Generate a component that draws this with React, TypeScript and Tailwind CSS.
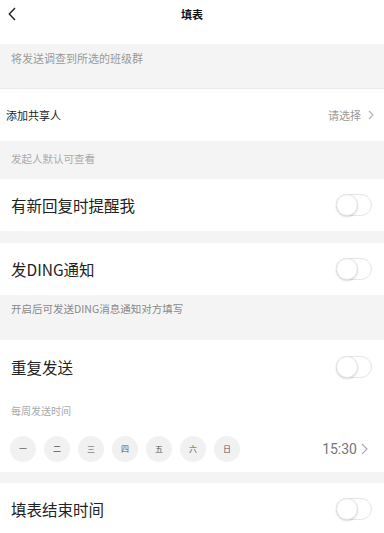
import React from "react";

const font = { fontFamily: '"Noto Sans CJK SC", "Noto Sans", sans-serif' };

function Toggle() {
  return (
    <div className="relative w-[36px] h-[22px] rounded-full border border-[#e6e6e6] bg-white">
      <div className="absolute left-[-1px] top-[-1px] w-[22px] h-[22px] rounded-full bg-white border border-[#e4e4e4] shadow-[0_1px_2px_rgba(0,0,0,0.15)]" />
    </div>
  );
}

function Chevron() {
  return (
    <svg width="6" height="10" viewBox="0 0 6 10" fill="none">
      <path d="M1 1l4 4-4 4" stroke="#b5b5b5" strokeWidth="1.1" />
    </svg>
  );
}

function ToggleRow({ label, h = "h-[52px]" }: { label: string; h?: string }) {
  return (
    <div className={`flex items-center justify-between bg-white pl-[11px] pr-[12px] ${h}`}>
      <div className="text-[15.5px] leading-[20px] text-[#222]">{label}</div>
      <Toggle />
    </div>
  );
}

export default function App() {
  const days = ["一", "二", "三", "四", "五", "六", "日"];
  return (
    <div className="w-[384px] h-[533px] overflow-hidden bg-[#f4f4f4]" style={font}>
      {/* header */}
      <div className="bg-white h-[44px]">
        <div className="relative flex items-center justify-center h-[28px]">
          <svg className="absolute left-[8px] top-[7px]" width="8" height="14" viewBox="0 0 8 14" fill="none">
            <path d="M7 1L1.3 7 7 13" stroke="#222" strokeWidth="1.4" />
          </svg>
          <div className="text-[11px] leading-[14px] font-bold text-[#111]">填表</div>
        </div>
      </div>
      {/* gray notice */}
      <div className="h-[45px] pt-[7px] pl-[11px] border-b border-[#ebebeb] text-[11px] leading-[14px] text-[#999]">
        将发送调查到所选的班级群
      </div>
      {/* share row */}
      <div className="flex items-center justify-between bg-white h-[52px] pl-[6px] pr-[10px]">
        <div className="text-[11px] leading-[14px] text-[#222]">添加共享人</div>
        <div className="flex items-center gap-[7px]">
          <div className="text-[11px] leading-[14px] text-[#999]">请选择</div>
          <Chevron />
        </div>
      </div>
      <div className="h-[38px] pt-[11px] pl-[11px] text-[10.5px] leading-[14px] text-[#aaa]">
        发起人默认可查看
      </div>
      <ToggleRow label="有新回复时提醒我" />
      <div className="h-[12px]" />
      <ToggleRow label="发DING通知" />
      <div className="h-[45px] pt-[7px] pl-[11px] text-[10.5px] leading-[14px] text-[#888]">
        开启后可发送DING消息通知对方填写
      </div>
      {/* repeat send */}
      <div className="bg-white h-[132px] flex flex-col">
        <ToggleRow label="重复发送" h="h-[54px]" />
        <div className="pl-[11px] pt-[10px] h-[42px] text-[10px] leading-[14px] text-[#aaa]">每周发送时间</div>
        <div className="flex items-center justify-between pl-[10px] pr-[16px] h-[26px]">
          <div className="flex gap-[8px]">
            {days.map((d) => (
              <div key={d} className="w-[26px] h-[26px] rounded-full bg-[#f1f1f1] flex items-center justify-center text-[8px] leading-none text-[#555]">
                {d}
              </div>
            ))}
          </div>
          <div className="flex items-center gap-[4px]">
            <div className="text-[14px] leading-[18px] text-[#777]" style={{ fontFamily: 'Roboto, "Noto Sans", sans-serif' }}>15:30</div>
            <svg width="7" height="12" viewBox="0 0 7 12" fill="none">
              <path d="M1 1l5 5-5 5" stroke="#aaa" strokeWidth="1.1" />
            </svg>
          </div>
        </div>
      </div>
      <div className="h-[11px]" />
      <ToggleRow label="填表结束时间" />
    </div>
  );
}
